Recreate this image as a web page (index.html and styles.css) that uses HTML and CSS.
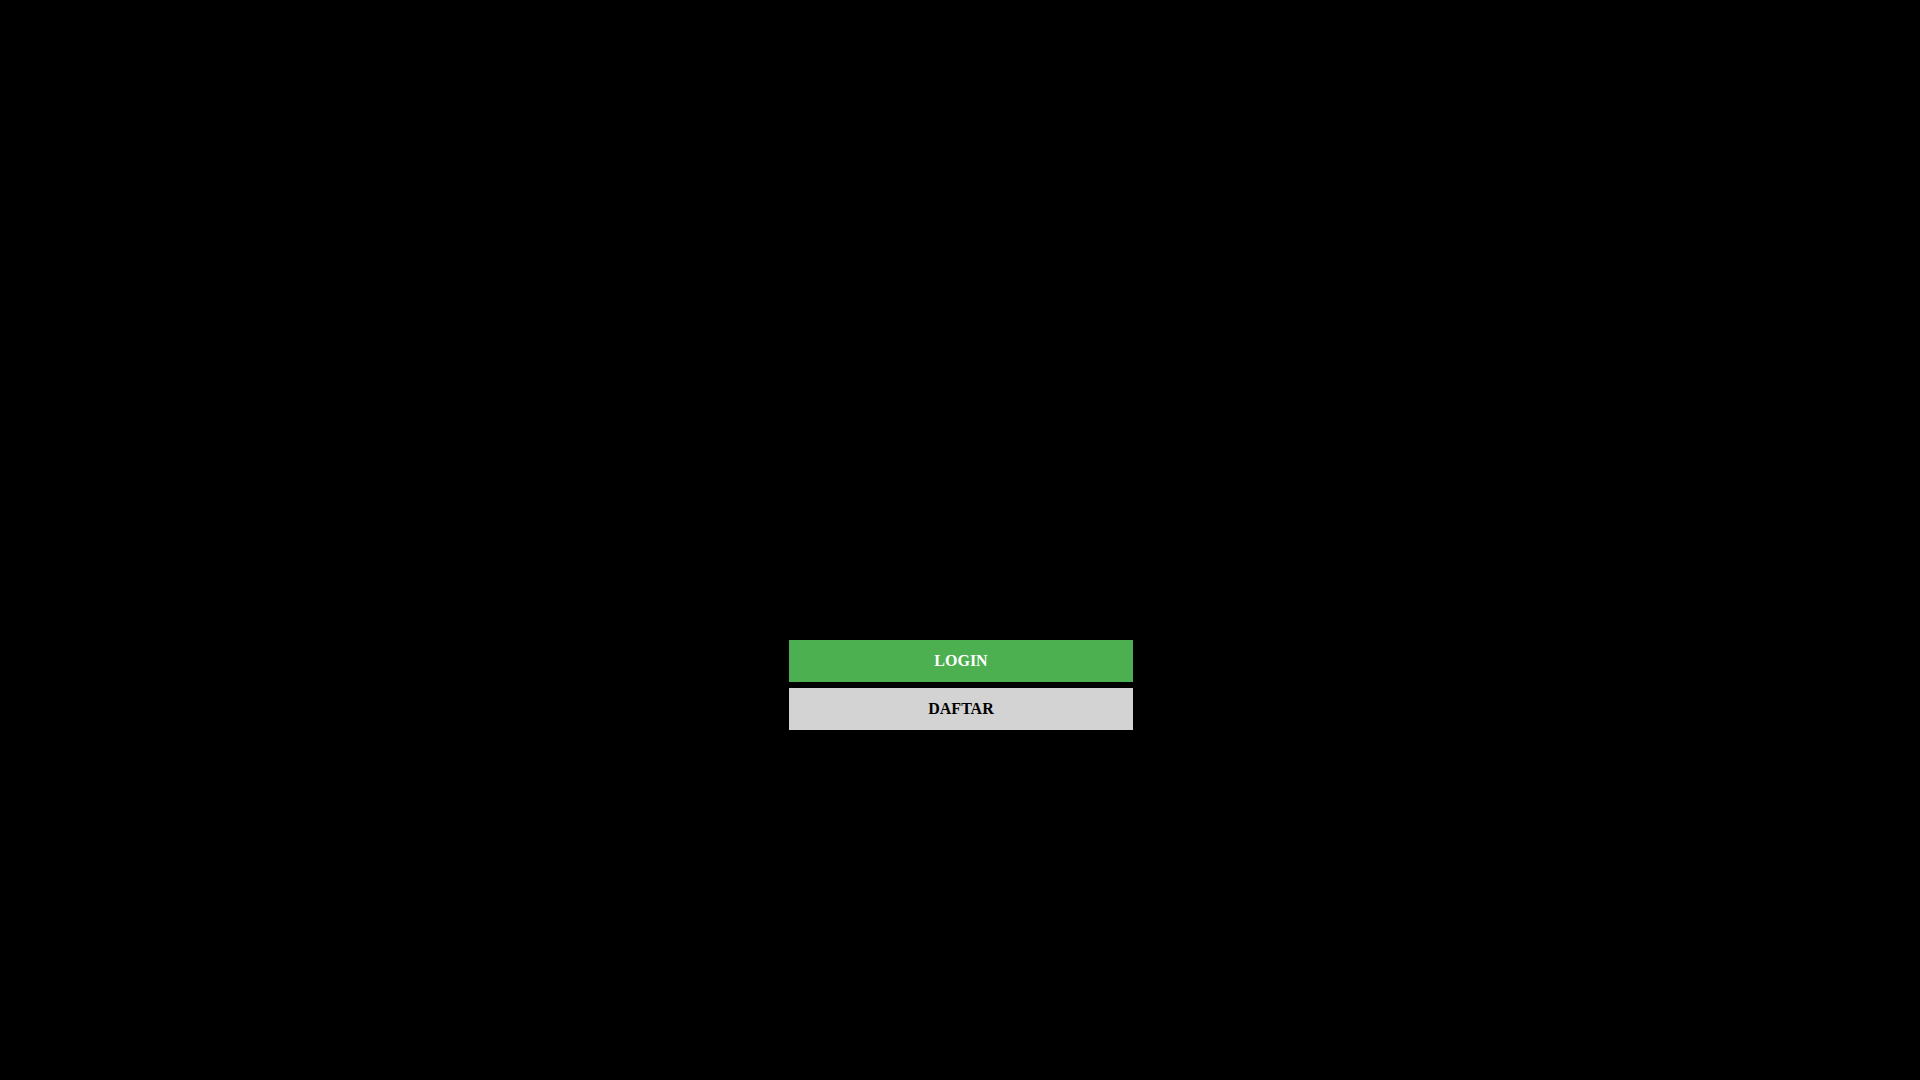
FILE: index.html
```html
<!DOCTYPE html>
<html>
<head>
<meta charset="utf-8">
<title>Login</title>
<link rel="stylesheet" href="styles.css">
</head>
<body>
<main class="page">
  <div class="actions">
    <a class="btn btn-login" href="#">LOGIN</a>
    <a class="btn btn-daftar" href="#">DAFTAR</a>
  </div>
</main>
</body>
</html>
```

FILE: styles.css
```css
html, body {
  margin: 0;
  padding: 0;
  background: #000;
  height: 100%;
}
.page {
  display: flex;
  justify-content: center;
  padding-top: 640px;
  padding-left: 2px;
  box-sizing: border-box;
  min-height: 100vh;
}
.actions {
  width: 344px;
  display: flex;
  flex-direction: column;
  gap: 6px;
}
.btn {
  display: flex;
  align-items: center;
  justify-content: center;
  height: 42px;
  font-family: "Liberation Serif", "Times New Roman", serif;
  font-weight: bold;
  font-size: 16px;
  text-decoration: none;
}
.btn-login {
  background: #4caf50;
  color: #fff;
}
.btn-daftar {
  background: #d3d3d3;
  color: #000;
}
```
